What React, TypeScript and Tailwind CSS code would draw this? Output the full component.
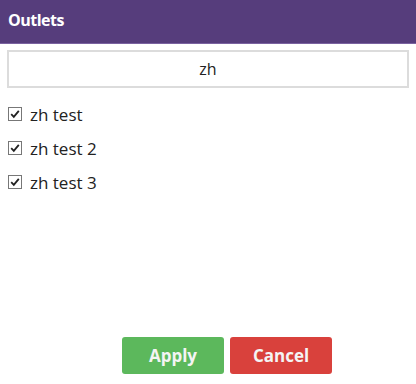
import React, { useState } from "react";

const outlets = ["zh test", "zh test 2", "zh test 3"];

export default function App() {
  const [query, setQuery] = useState("zh");
  const [checked, setChecked] = useState<boolean[]>([true, true, true]);

  return (
    <main
      className="flex h-[384px] w-[416px] flex-col bg-white text-[#222]"
      style={{ fontFamily: '"Open Sans", "Noto Sans", sans-serif' }}
    >
      <header className="flex h-[44px] items-center border-b border-[#7a62a0] bg-[#563d7c] px-2 pb-[4px]">
        <h1 className="text-[16px] font-bold tracking-[-0.5px] text-white">Outlets</h1>
      </header>

      <div className="px-[7px] pt-[6px]">
        <input
          value={query}
          onChange={(e) => setQuery(e.target.value)}
          className="h-[38px] w-full border-2 border-[#dcdcdc] bg-white text-center text-[16px] text-[#222] outline-none"
        />
      </div>

      <ul className="mt-[15px] flex flex-col gap-[10px] pl-[8px]">
        {outlets.map((name, i) => (
          <li
            key={name}
            className="flex h-[24px] cursor-pointer items-center gap-[8px]"
            onClick={() =>
              setChecked((c) => c.map((v, j) => (j === i ? !v : v)))
            }
          >
            <span className="mb-[3px] flex h-[14px] w-[14px] items-center justify-center border border-[#777] bg-white">
              {checked[i] && (
                <svg width="10" height="10" viewBox="0 0 10 10">
                  <path
                    d="M1.2 5.2 L3.8 7.8 L8.8 1.8"
                    fill="none"
                    stroke="#222"
                    strokeWidth="1.8"
                  />
                </svg>
              )}
            </span>
            <span className="text-[17px]">{name}</span>
          </li>
        ))}
      </ul>

      <div className="mt-auto mb-[10px] flex justify-center gap-[6px] pl-[38px]">
        <button className="h-[37px] w-[102px] rounded-[3px] bg-[#5cb85c] text-[17px] font-bold text-[#f4f4f4]">
          Apply
        </button>
        <button className="h-[37px] w-[102px] rounded-[3px] bg-[#d9413c] text-[17px] font-bold text-[#f4f4f4]">
          Cancel
        </button>
      </div>
    </main>
  );
}
